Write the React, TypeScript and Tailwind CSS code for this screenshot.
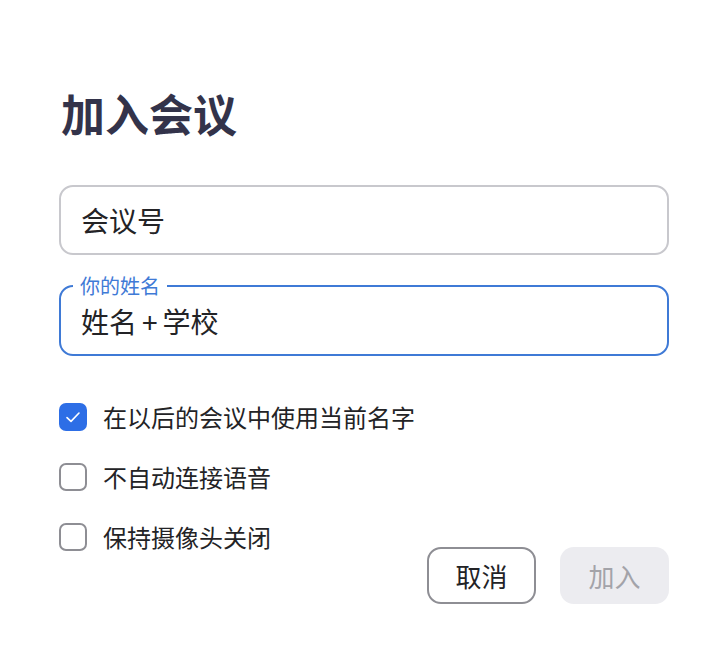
import { useState } from "react";

const font = { fontFamily: '"Noto Sans CJK SC", "Noto Sans", sans-serif' };

function Check({ checked, label, onToggle }: { checked: boolean; label: string; onToggle: () => void }) {
	return (
		<label className="flex items-center gap-4 h-[28px] cursor-pointer" onClick={onToggle}>
			{checked ? (
				<span className="flex h-[28px] w-[28px] items-center justify-center rounded-[7px] bg-[#2d6ee6]">
					<svg width="18" height="18" viewBox="0 0 18 18" fill="none">
						<path d="M3 9.6l4 3.8L15 5" stroke="white" strokeWidth="1.6" strokeLinecap="round" strokeLinejoin="round" />
					</svg>
				</span>
			) : (
				<span className="h-[28px] w-[28px] rounded-[7px] border-2 border-[#8e8e94] bg-white" />
			)}
			<span className="text-[24px] leading-[28px] text-[#232326]">{label}</span>
		</label>
	);
}

export default function App() {
	const [opts, setOpts] = useState([true, false, false]);
	const labels = ["在以后的会议中使用当前名字", "不自动连接语音", "保持摄像头关闭"];

	return (
		<div className="h-[664px] w-[728px] bg-white pl-[59px] pt-[88px]" style={font}>
			<div className="w-[610px]">
				<h1 className="text-[44px] font-bold leading-[50px] text-[#33334a] pl-[2px]">加入会议</h1>

				<div className="mt-[47px] flex h-[70px] items-center rounded-[14px] border-2 border-[#c8c8cd] px-[20px]">
					<span className="text-[28px] text-[#232326]">会议号</span>
				</div>

				<fieldset className="mt-[19px] h-[82px] rounded-[14px] border-2 border-[#3f7ad6] px-[12px] pb-0">
					<legend className="px-[7px] text-[20px] leading-[24px] text-[#3f7ad6]">你的姓名</legend>
					<div className="pl-[8px] pt-[5px] text-[28px] leading-[36px] text-[#232326]">
						姓名<span className="mx-[5px]">+</span>学校
					</div>
				</fieldset>

				<div className="mt-[47px] flex items-start justify-between">
					<div className="flex flex-col gap-[32px]">
						{labels.map((l, i) => (
							<Check
								key={l}
								label={l}
								checked={opts[i]}
								onToggle={() => setOpts(opts.map((v, j) => (j === i ? !v : v)))}
							/>
						))}
					</div>
					<div className="mt-[144px] flex gap-[24px]">
						<button className="h-[57px] w-[109px] rounded-[14px] border-2 border-[#8e8e94] bg-white text-[26px] text-[#232326]">取消</button>
						<button className="h-[57px] w-[109px] rounded-[14px] bg-[#ececf0] text-[26px] text-[#a3a3a9]">加入</button>
					</div>
				</div>
			</div>
		</div>
	);
}
